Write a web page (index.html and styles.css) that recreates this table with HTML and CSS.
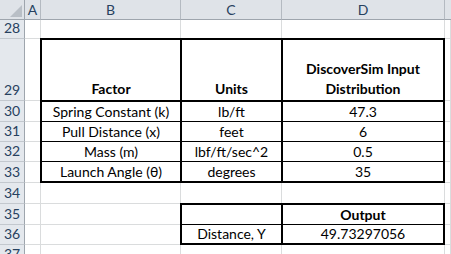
FILE: index.html
```html
<!DOCTYPE html>
<html>
<head>
<meta charset="utf-8">
<link rel="stylesheet" href="styles.css">
</head>
<body>
<div class="sheet">
  <div class="corner"><svg class="tri" width="12" height="12" viewBox="0 0 12 12"><polygon points="12,0 12,12 0,12" fill="#b9bfc6"/></svg></div>
  <div class="ch">A</div><div class="ch">B</div><div class="ch">C</div><div class="ch">D</div><div class="ch last"></div>

  <div class="rh">28</div><div class="c"></div><div class="c"></div><div class="c"></div><div class="c"></div><div class="c"></div>
  <div class="rh">29</div><div class="c"></div><div class="c"></div>
  <div class="rh">30</div><div class="c"></div><div class="c"></div>
  <div class="rh">31</div><div class="c"></div><div class="c"></div>
  <div class="rh">32</div><div class="c"></div><div class="c"></div>
  <div class="rh">33</div><div class="c"></div><div class="c"></div>
  <div class="rh">34</div><div class="c"></div><div class="c"></div><div class="c"></div><div class="c"></div><div class="c"></div>
  <div class="rh">35</div><div class="c"></div><div class="c"></div><div class="c"></div>
  <div class="rh">36</div><div class="c"></div><div class="c"></div><div class="c"></div>
  <div class="rh">37</div><div class="c"></div><div class="c"></div><div class="c"></div><div class="c"></div><div class="c"></div>

  <div class="tbl inputs">
    <div class="t head vr"><span>Factor</span></div>
    <div class="t head vr"><span>Units</span></div>
    <div class="t head"><span>DiscoverSim Input Distribution</span></div>
    <div class="t row vr">Spring Constant (k)</div>
    <div class="t row vr">lb/ft</div>
    <div class="t row">47.3</div>
    <div class="t row vr">Pull Distance (x)</div>
    <div class="t row vr">feet</div>
    <div class="t row">6</div>
    <div class="t row vr">Mass (m)</div>
    <div class="t row vr">lbf/ft/sec^2</div>
    <div class="t row">0.5</div>
    <div class="t vr">Launch Angle (θ)</div>
    <div class="t vr">degrees</div>
    <div class="t">35</div>
  </div>

  <div class="tbl output">
    <div class="t row vr"></div>
    <div class="t row bold">Output</div>
    <div class="t vr">Distance, Y</div>
    <div class="t">49.73297056</div>
  </div>
</div>
</body>
</html>
```
FILE: styles.css
```css
html, body {
  margin: 0;
  padding: 0;
  background: #ffffff;
}
.sheet {
  width: 451px;
  height: 254px;
  overflow: hidden;
  display: grid;
  grid-template-columns: 25px 16px 140px 101px 163px 1fr;
  grid-template-rows: 20px 19px 62px 21px 20px 20px 21px 21px 21px 20px 1fr;
  font-family: Lato, "Open Sans", sans-serif;
  font-size: 14px;
  color: #000;
}
.corner {
  background: #dfe3e8;
  border-right: 1px solid #9ea5ad;
  border-bottom: 1px solid #9ea5ad;
  box-sizing: border-box;
  display: flex;
  align-items: flex-end;
  justify-content: flex-end;
  padding: 0 2px 2px 0;
}
.tri { display: block; }
.ch {
  background: #dfe3e8;
  border-right: 1px solid #b4bac1;
  border-bottom: 1px solid #9ea5ad;
  box-sizing: border-box;
  color: #27415f;
  display: flex;
  align-items: center;
  justify-content: center;
  line-height: 18px;
}
.ch.last { border-right: none; }
.rh {
  background: #e4e8ed;
  border-right: 1px solid #9ea5ad;
  border-bottom: 1px solid #c3c8ce;
  box-sizing: border-box;
  color: #27415f;
  display: flex;
  align-items: flex-end;
  justify-content: center;
  line-height: 18px;
  padding-bottom: 1px;
}
.c {
  border-right: 1px solid #dadcdd;
  border-bottom: 1px solid #dadcdd;
  box-sizing: border-box;
}
.tbl {
  z-index: 1;
  background: #fff;
  margin: -1px 0 0 -1px;
  border: 2px solid #000;
  display: grid;
}
.inputs {
  grid-column: 3 / 6;
  grid-row: 3 / 8;
  grid-template-columns: 140px 101px 1fr;
  grid-template-rows: 62px 20px 20px 20px 1fr;
}
.output {
  grid-column: 4 / 6;
  grid-row: 9 / 11;
  grid-template-columns: 101px 1fr;
  grid-template-rows: 20px 1fr;
}
.t {
  box-sizing: border-box;
  display: flex;
  align-items: flex-end;
  justify-content: center;
  text-align: center;
  line-height: 18px;
  padding-bottom: 0px;
  white-space: nowrap;
}
.t.vr { border-right: 2px solid #000; }
.t.row { border-bottom: 1px solid #000; }
.t.head {
  border-bottom: 2px solid #000;
  font-weight: bold;
  white-space: normal;
  line-height: 20px;
  padding: 0 18px 1px;
}
.bold { font-weight: bold; }
```
